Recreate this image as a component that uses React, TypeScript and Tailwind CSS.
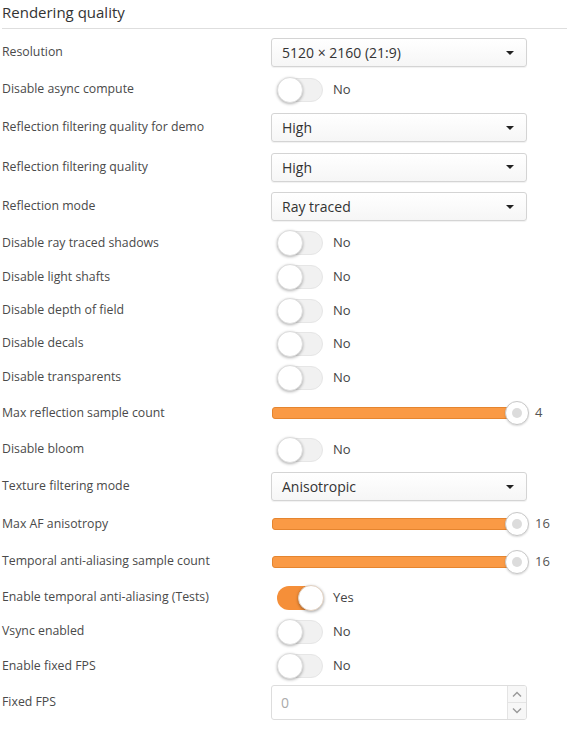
import React from "react";

type Row =
  | { kind: "select"; label: string; value: string; h: string }
  | { kind: "toggle"; label: string; on?: boolean; h: string }
  | { kind: "slider"; label: string; value: string; h: string }
  | { kind: "number"; label: string; value: string; h: string };

const rows: Row[] = [
  { kind: "select", label: "Resolution", value: "5120 × 2160 (21:9)", h: "h-[37px]" },
  { kind: "toggle", label: "Disable async compute", h: "h-[37px]" },
  { kind: "select", label: "Reflection filtering quality for demo", value: "High", h: "h-[39px]" },
  { kind: "select", label: "Reflection filtering quality", value: "High", h: "h-[40px]" },
  { kind: "select", label: "Reflection mode", value: "Ray traced", h: "h-[39px]" },
  { kind: "toggle", label: "Disable ray traced shadows", h: "h-[34px]" },
  { kind: "toggle", label: "Disable light shafts", h: "h-[34px]" },
  { kind: "toggle", label: "Disable depth of field", h: "h-[33px]" },
  { kind: "toggle", label: "Disable decals", h: "h-[33px]" },
  { kind: "toggle", label: "Disable transparents", h: "h-[35px]" },
  { kind: "slider", label: "Max reflection sample count", value: "4", h: "h-[36px]" },
  { kind: "toggle", label: "Disable bloom", h: "h-[37px]" },
  { kind: "select", label: "Texture filtering mode", value: "Anisotropic", h: "h-[37px]" },
  { kind: "slider", label: "Max AF anisotropy", value: "16", h: "h-[38px]" },
  { kind: "slider", label: "Temporal anti-aliasing sample count", value: "16", h: "h-[37px]" },
  { kind: "toggle", label: "Enable temporal anti-aliasing (Tests)", on: true, h: "h-[35px]" },
  { kind: "toggle", label: "Vsync enabled", h: "h-[33px]" },
  { kind: "toggle", label: "Enable fixed FPS", h: "h-[36px]" },
  { kind: "number", label: "Fixed FPS", value: "0", h: "h-[36px]" },
];

function Select({ value }: { value: string }) {
  return (
    <div className="flex h-[29px] w-[256px] items-center justify-between rounded-[3px] border border-[#d4d4d4] bg-gradient-to-b from-white to-[#f6f6f6] pl-[10px] pr-[12px] text-[14px] text-[#333] shadow-[0_1px_1px_rgba(0,0,0,0.06)]">
      <span>{value}</span>
      <svg width="8" height="4" viewBox="0 0 8 4">
        <path d="M0 0h8L4 4z" fill="#222" />
      </svg>
    </div>
  );
}

function Toggle({ on }: { on?: boolean }) {
  return (
    <div className="ml-[6px] flex items-center">
      <div
        className={
          on
            ? "relative h-[24px] w-[46px] rounded-full bg-[#f58f39]"
            : "relative h-[24px] w-[46px] rounded-full border border-[#e6e6e6] bg-[#f1f1f1]"
        }
      >
        <div
          className={
            on
              ? "absolute right-[-1px] top-[-1px] h-[26px] w-[26px] rounded-full border border-[#e3d2c2] bg-white shadow-[0_1px_3px_rgba(0,0,0,0.35)]"
              : "absolute left-[-1px] top-[-2px] h-[26px] w-[26px] rounded-full border border-[#ddd] bg-white shadow-[0_1px_3px_rgba(0,0,0,0.3)]"
          }
        />
      </div>
      <span className="ml-[10px] text-[13px] text-[#444]">{on ? "Yes" : "No"}</span>
    </div>
  );
}

function Slider({ value }: { value: string }) {
  return (
    <div className="flex items-center">
      <div className="relative ml-[1px] flex h-[24px] w-[256px] items-center">
        <div className="h-[12px] w-[244px] rounded-[3px] border border-[#e5852f] bg-[#fa9a45]" />
        <div className="absolute left-[233px] top-0 flex h-[24px] w-[24px] items-center justify-center rounded-full border border-[#c8c8c8] bg-white shadow-[0_1px_2px_rgba(0,0,0,0.15)]">
          <div className="h-[10px] w-[10px] rounded-full bg-[#dcdcdc]" />
        </div>
      </div>
      <span className="ml-[7px] text-[13px] text-[#555]">{value}</span>
    </div>
  );
}

function NumberInput({ value }: { value: string }) {
  return (
    <div className="flex h-[35px] w-[256px] overflow-hidden rounded-[3px] border border-[#ddd] bg-white">
      <div className="flex flex-1 items-center pl-[9px] text-[14px] text-[#aaa]">{value}</div>
      <div className="flex w-[19px] flex-col border-l border-[#e4e4e4] bg-[#f7f7f7]">
        <div className="flex flex-1 items-center justify-center border-b border-[#e4e4e4]">
          <svg width="10" height="6" viewBox="0 0 10 6">
            <path d="M1 5.5L5 1.5L9 5.5" fill="none" stroke="#999" strokeWidth="1.4" />
          </svg>
        </div>
        <div className="flex flex-1 items-center justify-center">
          <svg width="10" height="6" viewBox="0 0 10 6">
            <path d="M1 0.5L5 4.5L9 0.5" fill="none" stroke="#999" strokeWidth="1.4" />
          </svg>
        </div>
      </div>
    </div>
  );
}

export default function App() {
  return (
    <div className="min-h-screen w-[567px] bg-white font-['Open_Sans',sans-serif]">
      <div className="ml-[2px] flex h-[29px] items-center border-b border-[#dedede] pb-[4px] text-[15px] text-[#333]">
        Rendering quality
      </div>
      <div className="mt-[5px] flex flex-col">
        {rows.map((r) => (
          <div key={r.label} className={`flex items-center ${r.h}`}>
            <div className="w-[271px] pl-[2px] text-[12.3px] text-[#4a4a4a]">{r.label}</div>
            {r.kind === "select" && <Select value={r.value} />}
            {r.kind === "toggle" && <Toggle on={r.on} />}
            {r.kind === "slider" && <Slider value={r.value} />}
            {r.kind === "number" && <NumberInput value={r.value} />}
          </div>
        ))}
      </div>
    </div>
  );
}
